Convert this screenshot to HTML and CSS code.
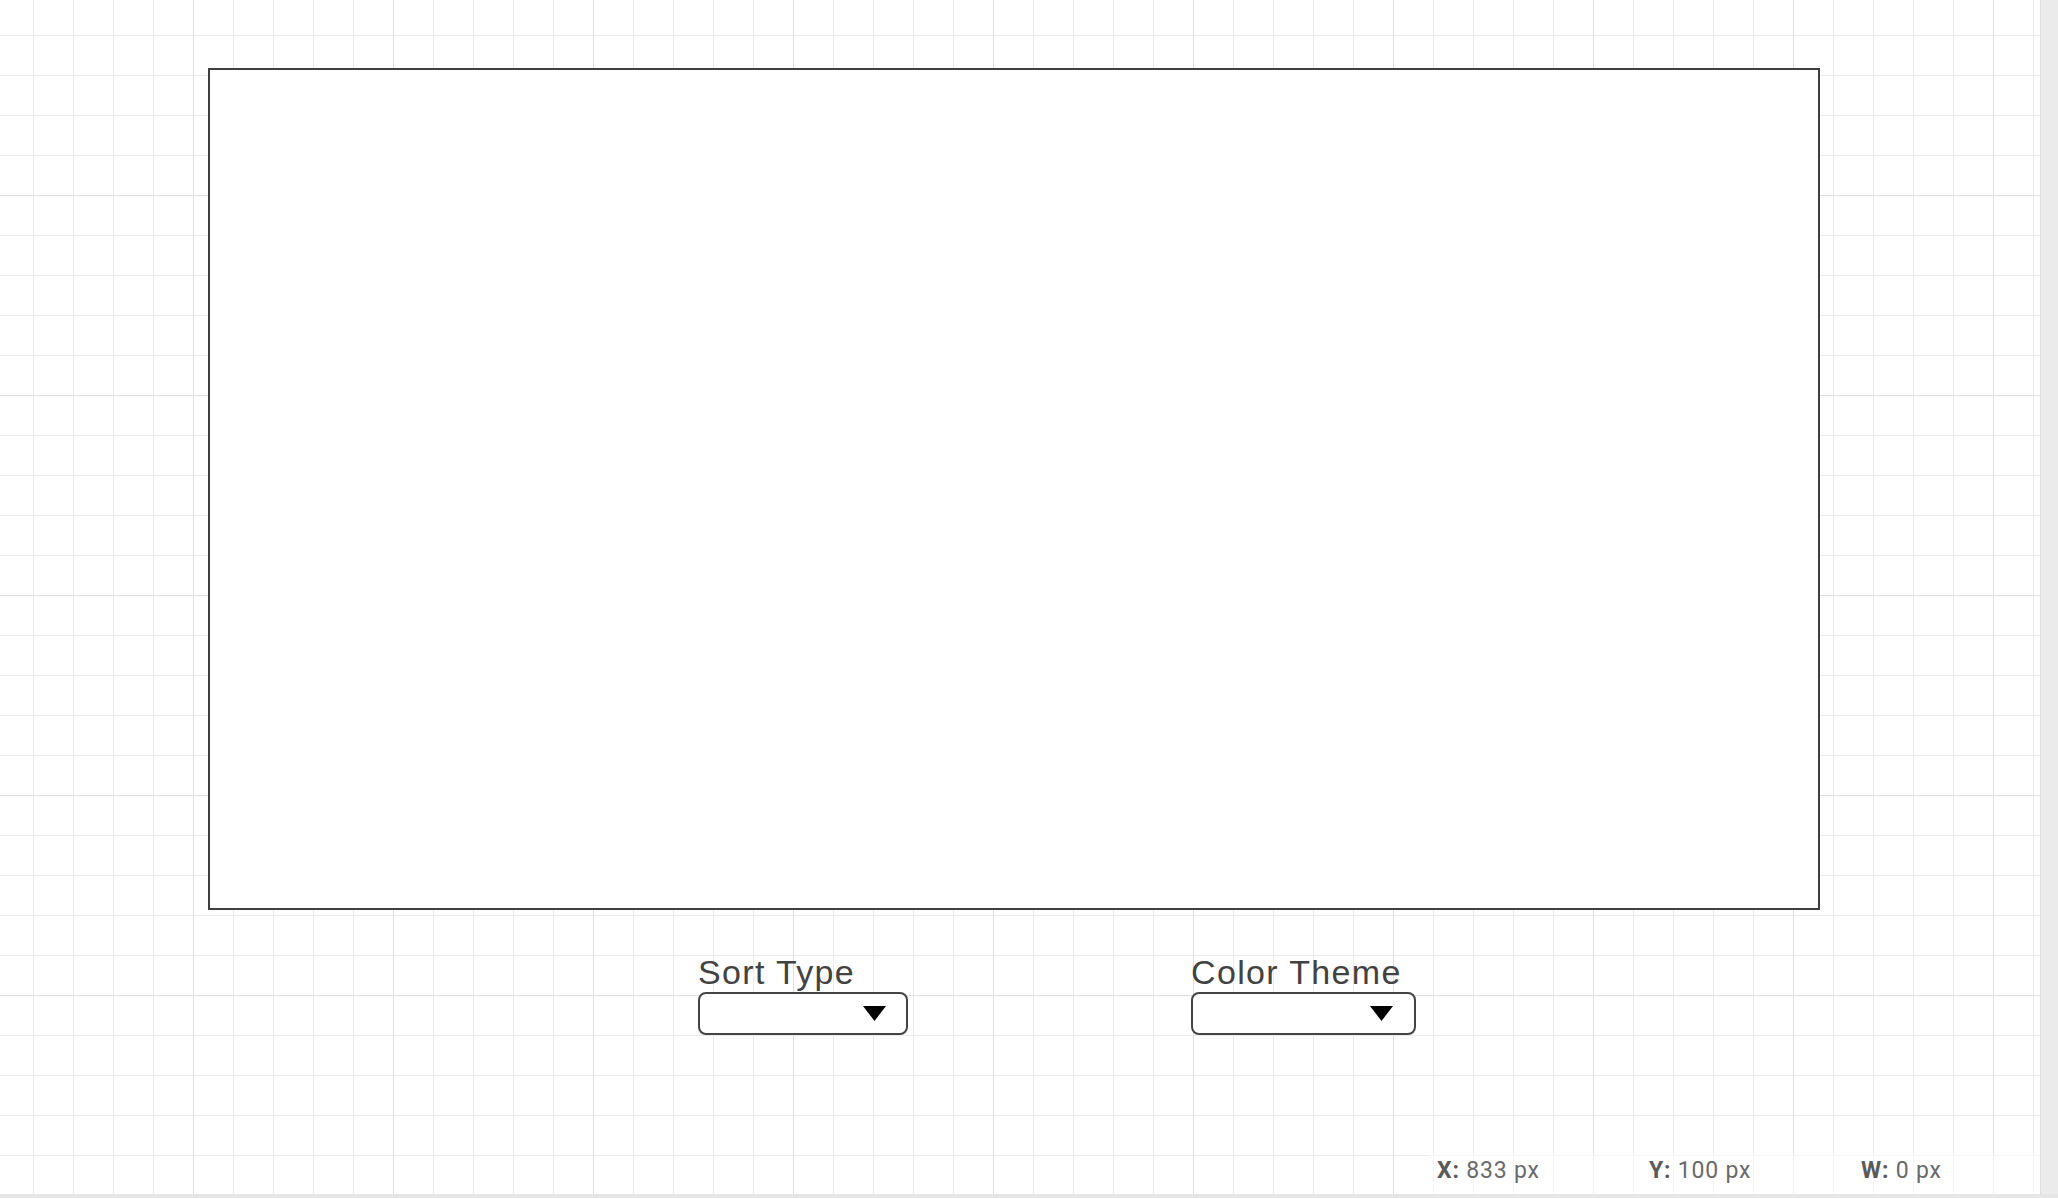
FILE: index.html
```html
<!DOCTYPE html>
<html lang="en">
<head>
<meta charset="utf-8">
<title>Sorting Visualizer</title>
<link rel="stylesheet" href="styles.css">
</head>
<body>
<div class="app">
  <div class="main">
    <div class="canvas">
      <div class="chart"></div>
      <div class="controls">
        <div class="control control-sort">
          <div class="label">Sort Type</div>
          <div class="select">
            <svg class="caret" width="23" height="15" viewBox="0 0 23 15"><polygon points="0,0 23,0 11.5,15" fill="#000"/></svg>
          </div>
        </div>
        <div class="control control-theme">
          <div class="label">Color Theme</div>
          <div class="select">
            <svg class="caret" width="23" height="15" viewBox="0 0 23 15"><polygon points="0,0 23,0 11.5,15" fill="#000"/></svg>
          </div>
        </div>
      </div>
      <div class="status">
        <div class="status-item"><b>X:</b> 833 px</div>
        <div class="status-item"><b>Y:</b> 100 px</div>
        <div class="status-item"><b>W:</b> 0 px</div>
      </div>
    </div>
    <div class="vscroll"></div>
  </div>
  <div class="hscroll"></div>
</div>
</body>
</html>
```
FILE: styles.css
```css
* { box-sizing: border-box; }
html, body { margin: 0; padding: 0; }
body {
  width: 2058px;
  height: 1198px;
  overflow: hidden;
  background: #fff;
  font-family: "Liberation Sans", Arial, sans-serif;
}
.app {
  display: flex;
  flex-direction: column;
  width: 2058px;
  height: 1198px;
}
.main {
  display: flex;
  height: 1194px;
}
.canvas {
  position: relative;
  width: 2040px;
  height: 1194px;
  padding: 68px 0 0 208px;
  background-color: #fff;
  background-image:
    linear-gradient(to right, #dfdfdf 0, #dfdfdf 1px, transparent 1px),
    linear-gradient(to bottom, #dfdfdf 0, #dfdfdf 1px, transparent 1px),
    linear-gradient(to right, #ebebeb 0, #ebebeb 1px, transparent 1px),
    linear-gradient(to bottom, #ebebeb 0, #ebebeb 1px, transparent 1px);
  background-size: 200px 200px, 200px 200px, 40px 40px, 40px 40px;
  background-position: 193px 0, 0 195px, 33px 0, 0 35px;
}
.vscroll {
  width: 18px;
  height: 1194px;
  background: #ebebeb;
  border-left: 1px solid #e0e0e0;
}
.hscroll {
  height: 4px;
  background: #e6e6e6;
}
.chart {
  width: 1612px;
  height: 842px;
  background: #fff;
  border: 2px solid #3f3f3f;
}
.controls {
  display: flex;
  gap: 283px;
  margin: 42px 0 0 490px;
}
.control {
  display: flex;
  flex-direction: column;
}
.label {
  font-size: 34px;
  line-height: 40px;
  letter-spacing: 1.35px;
  color: #424242;
  white-space: nowrap;
}
.select {
  display: flex;
  align-items: center;
  justify-content: flex-end;
  height: 43px;
  border: 2px solid #444;
  border-radius: 8px;
  background: #fff;
}
.control-sort .select { width: 210px; padding-right: 20px; }
.control-theme .select { width: 225px; padding-right: 21px; }
.caret { display: block; }
.status {
  position: absolute;
  left: 1428px;
  top: 1154px;
  width: 612px;
  height: 40px;
  display: flex;
  padding-left: 9px;
  background: rgba(255, 255, 255, 0.55);
  font-family: Roboto, "Liberation Sans", sans-serif;
  font-size: 23px;
  letter-spacing: 0.8px;
  line-height: 34px;
  color: #6a6a6a;
  overflow: hidden;
}
.status-item {
  flex: none;
  width: 212px;
  white-space: nowrap;
}
.status-item b {
  font-weight: 700;
  color: #5a5a5a;
}
```
